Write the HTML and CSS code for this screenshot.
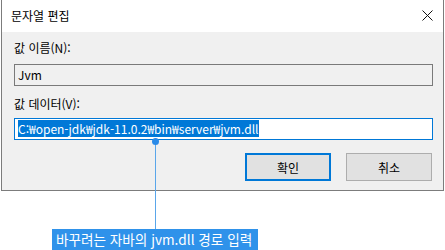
FILE: index.html
```html
<!DOCTYPE html>
<html lang="ko">

<head>
    <meta charset="UTF-8">
    <meta name="viewport" content="width=device-width, initial-scale=1.0">
    <title>문자열 편집</title>
    <link rel="stylesheet" href="styles.css">
</head>

<body>

    <div class="page">
        <div class="dialog">
            <div class="titlebar">
                <span class="title">문자열 편집</span>
                <svg class="close" width="11" height="11" viewBox="0 0 11 11">
                    <path d="M0.5 0.5 L10.5 10.5 M10.5 0.5 L0.5 10.5" stroke="#111" stroke-width="1" fill="none" />
                </svg>
            </div>
            <div class="content">
                <label class="field-label">값 이름(N):</label>
                <div class="field readonly">Jvm</div>
                <label class="field-label second">값 데이터(V):</label>
                <div class="field focused"><span class="selected">C:₩open-jdk₩jdk-11.0.2₩bin₩server₩jvm.dll</span></div>
                <div class="buttons">
                    <button class="btn default">확인</button>
                    <button class="btn">취소</button>
                </div>
            </div>
        </div>

        <div class="callout-line"></div>
        <div class="callout-dot"></div>
        <div class="callout">바꾸려는 자바의 jvm.dll 경로 입력</div>
    </div>

</body>

</html>
```

FILE: styles.css
```css
body {
    margin: 0;
    padding: 0;
    background: #fff;
    font-family: "Noto Sans CJK KR", "Noto Sans", sans-serif;
    font-size: 12px;
    color: #000;
}

.page {
    position: relative;
    width: 445px;
    height: 250px;
    overflow: hidden;
}

.dialog {
    width: 441px;
    margin-left: 1px;
    border-left: 1px solid #7c7c7c;
    border-right: 1px solid #7c7c7c;
    border-bottom: 1px solid #7c7c7c;
}

.titlebar {
    height: 32px;
    background: #fff;
    display: flex;
    align-items: center;
    justify-content: space-between;
    padding: 0 10px 0 9px;
}

.title {
    font-size: 12px;
    margin-top: -1px;
}

.close {
    display: block;
    margin-top: -1px;
}

.content {
    background: #f0f0f0;
    padding: 8px 10px 9px 12px;
    display: flex;
    flex-direction: column;
}

.field-label {
    height: 16px;
    line-height: 16px;
    margin-bottom: 8px;
}

.field-label.second {
    margin-top: 10px;
    margin-bottom: 6px;
}

.field {
    height: 22px;
    box-sizing: border-box;
    border: 1px solid #7a7a7a;
    padding: 0 4px 0 3px;
    line-height: 20px;
}

.readonly {
    background: #f0f0f0;
}

.focused {
    background: #fff;
    border-color: #0078d7;
}

.selected {
    background: #0078d7;
    color: #fff;
    display: inline-block;
    line-height: 17px;
    padding-right: 1px;
}

.buttons {
    display: flex;
    justify-content: flex-end;
    gap: 15px;
    margin-top: 13px;
    padding-right: 1px;
}

.btn {
    width: 86px;
    height: 28px;
    box-sizing: border-box;
    border: 1px solid #adadad;
    background: #e1e1e1;
    font-family: inherit;
    font-size: 12px;
    padding: 0;
    color: #000;
}

.btn.default {
    border: 2px solid #0078d7;
}

.callout-line {
    position: absolute;
    left: 155px;
    top: 141px;
    width: 1px;
    height: 88px;
    background: #5aa6ea;
}

.callout-dot {
    position: absolute;
    left: 152px;
    top: 138px;
    width: 7px;
    height: 7px;
    border-radius: 50%;
    background: #2a8ae8;
}

.callout {
    margin: 38px 0 0 52px;
    width: 206px;
    height: 21px;
    box-sizing: border-box;
    background: #2f92ea;
    color: #fff;
    font-size: 13.6px;
    line-height: 21px;
    padding-left: 4px;
    white-space: nowrap;
}
```
